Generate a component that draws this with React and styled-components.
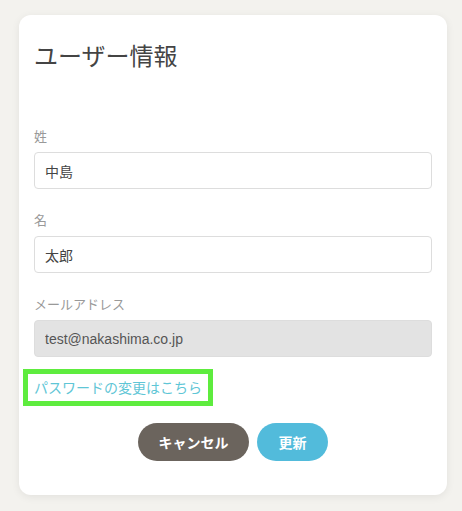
import React from "react";
import styled, { createGlobalStyle } from "styled-components";

const GlobalStyle = createGlobalStyle`
  html, body {
    margin: 0;
    padding: 0;
    background: #f3f2ee;
    font-family: "Noto Sans CJK JP", "Noto Sans", "Liberation Sans", sans-serif;
  }
`;

const fields = [
  { label: "姓", value: "中島" },
  { label: "名", value: "太郎" },
  { label: "メールアドレス", value: "test@nakashima.co.jp", disabled: true },
];

const App = () => {
  return (
    <>
      <GlobalStyle />
      <Page>
        <Card>
          <Title>ユーザー情報</Title>
          <Form>
            {fields.map((f) => (
              <Field key={f.label}>
                <Label>{f.label}</Label>
                <Input
                  type="text"
                  defaultValue={f.value}
                  disabled={f.disabled}
                  $disabled={f.disabled}
                />
              </Field>
            ))}
          </Form>
          <LinkRow>
            <PasswordLink href="#">パスワードの変更はこちら</PasswordLink>
          </LinkRow>
          <Actions>
            <Button $variant="cancel">キャンセル</Button>
            <Button $variant="primary">更新</Button>
          </Actions>
        </Card>
      </Page>
    </>
  );
};

const Page = styled.div`
  padding: 15px 15px 16px 19px;
`;

const Card = styled.div`
  width: 428px;
  box-sizing: border-box;
  background: #fff;
  border-radius: 12px;
  box-shadow: 0 2px 8px rgba(0, 0, 0, 0.07);
  padding: 22px 15px 34px;
`;

const Title = styled.h1`
  margin: 0;
  font-size: 24px;
  line-height: 36px;
  font-weight: 400;
  color: #444;
`;

const Form = styled.div`
  display: flex;
  flex-direction: column;
  gap: 21px;
  margin-top: 53px;
`;

const Field = styled.div`
  display: flex;
  flex-direction: column;
`;

const Label = styled.label`
  font-size: 13px;
  line-height: 20px;
  color: #999;
  margin-bottom: 6px;
`;

const Input = styled.input`
  box-sizing: border-box;
  width: 100%;
  height: 37px;
  border: 1px solid #ddd;
  border-radius: 4px;
  padding: 0 10px;
  font-size: 14px;
  color: #444;
  font-family: "Liberation Sans", "Noto Sans CJK JP", sans-serif;
  background: ${(p) => (p.$disabled ? "#e3e3e3" : "#fff")};
  outline: none;
  &:disabled {
    color: #555;
    -webkit-text-fill-color: #555;
    opacity: 1;
  }
`;

const LinkRow = styled.div`
  margin-top: 12px;
`;

const PasswordLink = styled.a`
  display: inline-block;
  margin-left: -11px;
  padding: 2px 6px;
  border: 5px solid #5eec3e;
  font-size: 14px;
  line-height: 23px;
  color: #5fc6d6;
  text-decoration: none;
`;

const Actions = styled.div`
  display: flex;
  justify-content: center;
  gap: 8px;
  margin-top: 17px;
`;

const Button = styled.button`
  height: 38px;
  border: none;
  border-radius: 19px;
  padding: 0;
  width: ${(p) => (p.$variant === "cancel" ? "111px" : "71px")};
  font-family: "Noto Sans CJK JP", sans-serif;
  font-size: 14px;
  font-weight: 700;
  color: #fff;
  background: ${(p) => (p.$variant === "cancel" ? "#6b645d" : "#52bbdb")};
  cursor: pointer;
`;

export default App;
